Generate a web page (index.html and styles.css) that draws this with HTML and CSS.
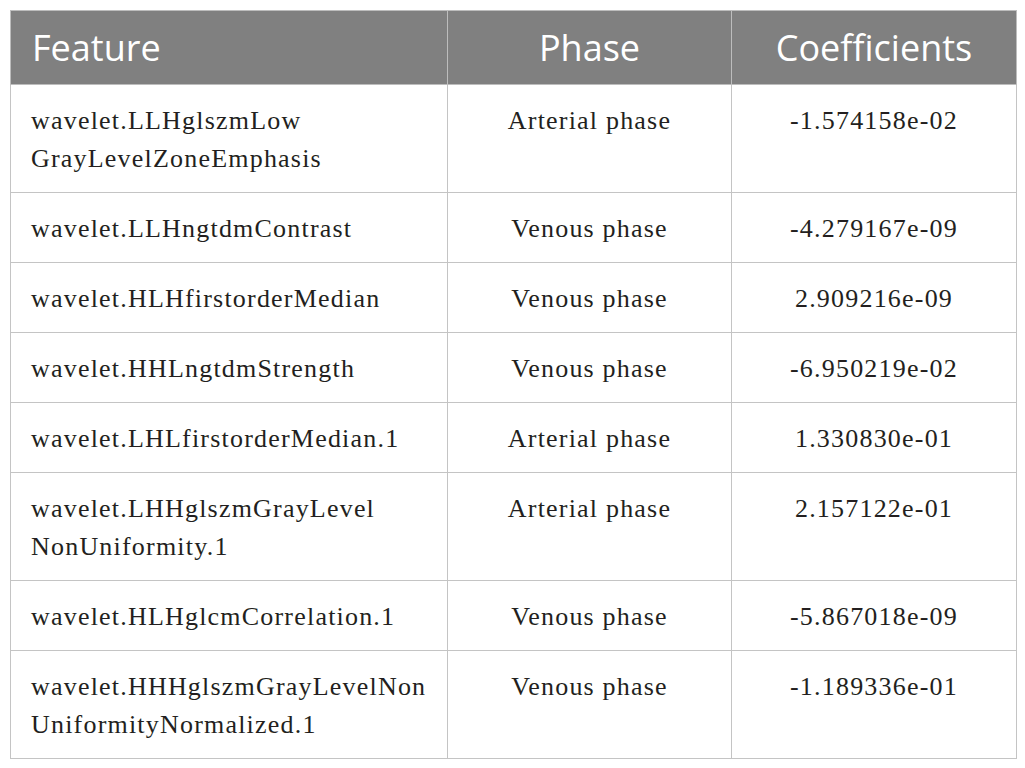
FILE: index.html
```html
<!DOCTYPE html>
<html>
<head>
<meta charset="utf-8">
<link rel="stylesheet" href="styles.css">
</head>
<body>
<div class="wrap">
<table class="tbl">
  <colgroup>
    <col class="c1"><col class="c2"><col class="c3">
  </colgroup>
  <thead>
    <tr>
      <th class="left">Feature</th>
      <th>Phase</th>
      <th>Coefficients</th>
    </tr>
  </thead>
  <tbody>
    <tr><td class="left">wavelet.LLHglszmLow<br>GrayLevelZoneEmphasis</td><td>Arterial phase</td><td>-1.574158e-02</td></tr>
    <tr><td class="left">wavelet.LLHngtdmContrast</td><td>Venous phase</td><td>-4.279167e-09</td></tr>
    <tr><td class="left">wavelet.HLHfirstorderMedian</td><td>Venous phase</td><td>2.909216e-09</td></tr>
    <tr><td class="left">wavelet.HHLngtdmStrength</td><td>Venous phase</td><td>-6.950219e-02</td></tr>
    <tr><td class="left">wavelet.LHLfirstorderMedian.1</td><td>Arterial phase</td><td>1.330830e-01</td></tr>
    <tr><td class="left">wavelet.LHHglszmGrayLevel<br>NonUniformity.1</td><td>Arterial phase</td><td>2.157122e-01</td></tr>
    <tr><td class="left">wavelet.HLHglcmCorrelation.1</td><td>Venous phase</td><td>-5.867018e-09</td></tr>
    <tr><td class="left">wavelet.HHHglszmGrayLevelNon<br>UniformityNormalized.1</td><td>Venous phase</td><td>-1.189336e-01</td></tr>
  </tbody>
</table>
</div>
</body>
</html>
```

FILE: styles.css
```css
html, body {
  margin: 0;
  padding: 0;
  background: #ffffff;
}
.wrap {
  padding: 10px;
}
.tbl {
  border-collapse: collapse;
  width: 1006px;
  table-layout: fixed;
}
.c1 { width: 437px; }
.c2 { width: 284px; }
.c3 { width: 285px; }
.tbl th {
  background: #808080;
  color: #ffffff;
  font-family: "Open Sans", "Liberation Sans", sans-serif;
  font-weight: 400;
  font-size: 36px;
  line-height: 48px;
  height: 73px;
  padding: 0 21px;
  text-align: center;
  vertical-align: middle;
  border: 1px solid #bdbdbd;
}
.tbl td {
  font-family: "Liberation Serif", "DejaVu Serif", serif;
  font-size: 26px;
  letter-spacing: 1.2px;
  line-height: 38px;
  color: #231f20;
  padding: 17px 20px 14px;
  text-align: center;
  vertical-align: top;
  border: 1px solid #c4c4c4;
}
.tbl .left {
  text-align: left;
}
```
